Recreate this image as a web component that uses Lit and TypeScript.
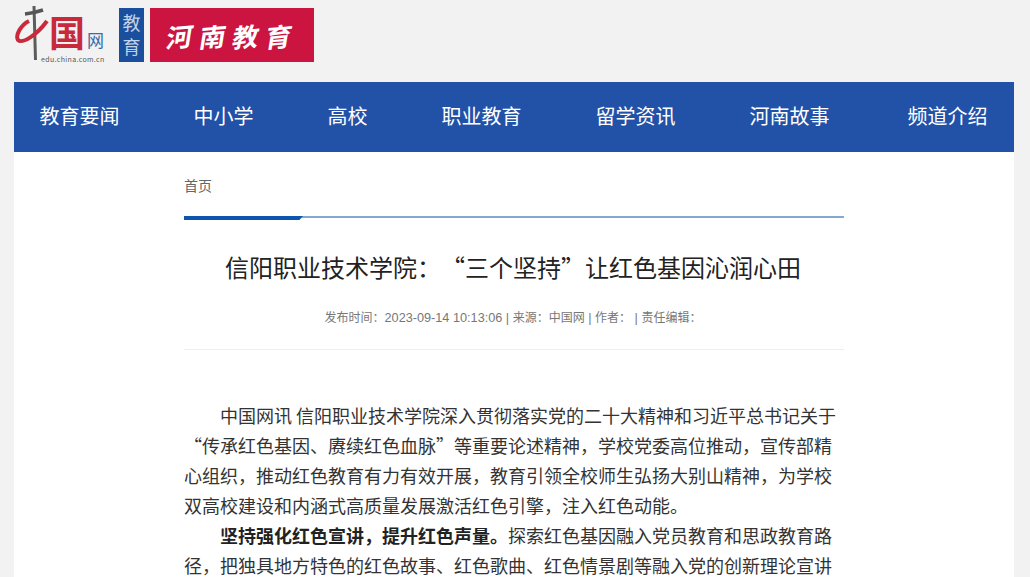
import { LitElement, html, css } from "lit";
import { customElement } from "lit/decorators.js";

const NAV = ["教育要闻", "中小学", "高校", "职业教育", "留学资讯", "河南故事", "频道介绍"];

@customElement("app-root")
export class AppRoot extends LitElement {
  static styles = css`
    :host {
      display: block;
      height: 577px;
      overflow: hidden;
      background: #f2f2f2;
      font-family: "Noto Sans CJK SC", "Liberation Sans", sans-serif;
      text-spacing-trim: space-all;
    }
    .page { width: 1000px; margin-left: 14px; }
    .head { height: 82px; display: flex; align-items: flex-start; }
    .logo1 { width: 105px; height: 66px; flex: none; }
    .logo1 svg { display: block; }
    .jy {
      width: 25px; height: 54px; margin-top: 8px; flex: none; box-sizing: border-box;
      padding-bottom: 2px;
      background: #1a4f9e; color: #c3d3e8;
      font-size: 18px; line-height: 24px; text-align: center;
      display: flex; flex-direction: column; justify-content: center;
    }
    .henan {
      width: 164px; height: 54px; margin: 8px 0 0 6px; flex: none; box-sizing: border-box;
      padding-left: 17px;
      background: #cc1440; color: #fff;
      font-weight: 700; font-size: 26px;
      display: flex; align-items: center; gap: 7px;
    }
    .henan span { display: block; transform: skewX(-14deg) rotate(-5deg); }
    nav {
      height: 70px; box-sizing: border-box; padding: 0 0 4px 25.5px; background: #2251a8; color: #fff;
      display: flex; align-items: center; gap: 74px;
      font-size: 20px;
    }
    nav a:last-child { margin-left: 4px; }
    main { background: #fff; height: 425px; padding: 0 170px; }
    .crumb { height: 64px; display: flex; align-items: center; padding-top: 2px; box-sizing: border-box; font-size: 14px; color: #666; }
    .rule { height: 2px; background: #80a9d4; position: relative; }
    .rule::after {
      content: ""; position: absolute; left: 0; top: 0; width: 119px; height: 4px;
      background: #0e56ac; clip-path: polygon(0 0, 100% 0, 97% 100%, 0 100%);
    }
    h1 {
      margin: 0; padding: 32px 2px 0 0;
      font-size: 24px; font-weight: 400; line-height: 34px; text-align: center; color: #222;
    }
    .meta {
      margin-top: 24px; padding-right: 2px; font-size: 12px; line-height: 18px; text-align: center; color: #777;
    }
    .meta .l { font-family: "Liberation Sans", sans-serif; font-size: 12.7px; }
    .sep { height: 1px; background: #eee; margin-top: 22px; }
    .body { margin-top: 50px; font-size: 18px; line-height: 30px; color: #333; }
    p { margin: 0; text-indent: 36px; }
    b { color: #222; }
  `;

  render() {
    return html`
      <div class="page" lang="zh-CN">
        <div class="head">
          <div class="logo1">
            <svg width="105" height="66" viewBox="0 0 105 66">
              <path d="M20 6 L21.5 60" stroke="#5c5c5c" stroke-width="3" fill="none"/>
              <path d="M11 14 Q20 13 29 10" stroke="#555" stroke-width="3.5" fill="none"/>
              <path d="M15 21 C7 25 1 35 4 40 C8 44 22 36 33 21" stroke="#c92a3b" stroke-width="4" fill="none"/>
              <text x="35" y="47" font-size="36" font-weight="700" fill="#c92a3b">国</text>
              <text x="73" y="47" font-size="17" fill="#3b6ca8">网</text>
              <text x="27" y="62" font-size="7" letter-spacing=".35" fill="#555">edu.china.com.cn</text>
            </svg>
          </div>
          <div class="jy"><span>教</span><span>育</span></div>
          <div class="henan"><span>河</span><span>南</span><span>教</span><span>育</span></div>
        </div>
        <nav>${NAV.map((n) => html`<a>${n}</a>`)}</nav>
        <main>
          <div class="crumb">首页</div>
          <div class="rule"></div>
          <h1>信阳职业技术学院：“三个坚持”让红色基因沁润心田</h1>
          <div class="meta">发布时间：<span class="l">2023-09-14 10:13:06 | </span>来源：中国网<span class="l"> | </span>作者：<span class="l"> | </span>责任编辑：</div>
          <div class="sep"></div>
          <div class="body">
            <p>中国网讯 信阳职业技术学院深入贯彻落实党的二十大精神和习近平总书记关于“传承红色基因、赓续红色血脉”等重要论述精神，学校党委高位推动，宣传部精心组织，推动红色教育有力有效开展，教育引领全校师生弘扬大别山精神，为学校双高校建设和内涵式高质量发展激活红色引擎，注入红色动能。</p>
            <p><b>坚持强化红色宣讲，提升红色声量。</b>探索红色基因融入党员教育和思政教育路径，把独具地方特色的红色故事、红色歌曲、红色情景剧等融入党的创新理论宣讲</p>
          </div>
        </main>
      </div>
    `;
  }
}
